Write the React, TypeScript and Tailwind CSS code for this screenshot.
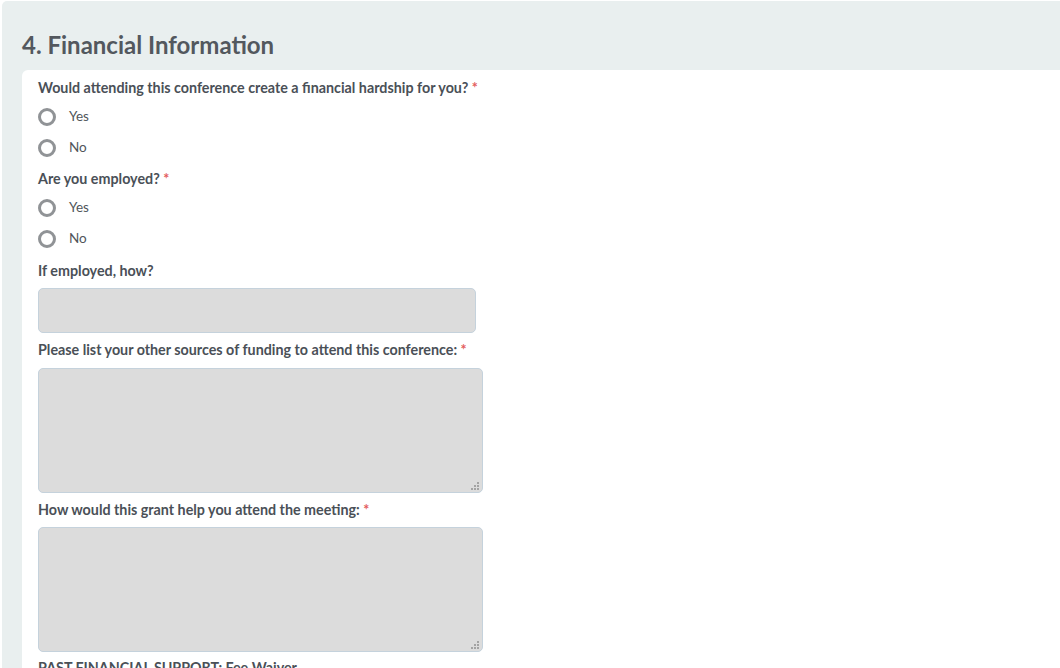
import React from "react";

const Label: React.FunctionComponent<{ text: string; required?: boolean }> = ({
  text,
  required,
}) => (
  <label className="block h-[18px] text-[14.3px] leading-[18px] font-bold text-[#4a5057]">
    {text}
    {required && <span className="text-[#e35d5d]"> *</span>}
  </label>
);

const Radio: React.FunctionComponent<{ name: string; value: string }> = ({
  name,
  value,
}) => (
  <label className="flex items-center h-[31px] cursor-pointer">
    <input type="radio" name={name} value={value} className="sr-only" />
    <span className="w-[18px] h-[18px] rounded-full border-[3px] border-[#909396] bg-white" />
    <span className="ml-[13px] text-[13.5px] text-[#50555a]">{value}</span>
  </label>
);

// dotted resize grip in the corner of the text areas
const Grip = () => (
  <svg
    className="absolute right-[4px] bottom-[3px] pointer-events-none"
    width="8"
    height="8"
    viewBox="0 0 8 8"
  >
    <rect x="6" y="0" width="2" height="2" fill="#a3a3a3" />
    <rect x="3" y="3" width="2" height="2" fill="#a3a3a3" />
    <rect x="6" y="3" width="2" height="2" fill="#a3a3a3" />
    <rect x="0" y="6" width="2" height="2" fill="#a3a3a3" />
    <rect x="3" y="6" width="2" height="2" fill="#a3a3a3" />
    <rect x="6" y="6" width="2" height="2" fill="#a3a3a3" />
  </svg>
);

const Area: React.FunctionComponent<{ name: string; className: string }> = ({
  name,
  className,
}) => (
  <div className={`relative w-[445px] h-[125px] ${className}`}>
    <textarea
      name={name}
      className="block w-full h-full resize-none rounded-[5px] border border-[#c5d2dc] bg-[#dcdcdc] px-3 py-2 text-[13px] outline-none"
    />
    <Grip />
  </div>
);

const App: React.FunctionComponent<{}> = () => {
  return (
    <div className="h-screen bg-white pt-[1px] pl-[2px] overflow-hidden font-['Lato',sans-serif]">
      <section className="bg-[#e9efef] rounded-tl-[5px] pl-[20px] min-h-[667px]">
        <h2 className="pt-[30px] h-[69px] text-[24px] leading-[28px] font-bold text-[#53585e]">
          4. Financial Information
        </h2>
        <form className="bg-white rounded-tl-[6px] pl-[16px] pt-[9px] pb-8 min-h-[600px]">
          <Label text="Would attending this conference create a financial hardship for you?" required />
          <div className="mt-[4px]">
            <Radio name="hardship" value="Yes" />
            <Radio name="hardship" value="No" />
          </div>

          <div className="mt-[7px]">
            <Label text="Are you employed?" required />
          </div>
          <div className="mt-[4px]">
            <Radio name="employed" value="Yes" />
            <Radio name="employed" value="No" />
          </div>

          <div className="mt-[8px]">
            <Label text="If employed, how?" />
          </div>
          <input
            type="text"
            name="employedHow"
            className="block mt-[8px] w-[438px] h-[45px] rounded-[5px] border border-[#c5d2dc] bg-[#dcdcdc] px-3 text-[13px] outline-none"
          />

          <div className="mt-[8px]">
            <Label text="Please list your other sources of funding to attend this conference:" required />
          </div>
          <Area name="funding" className="mt-[9px]" />

          <div className="mt-[8px]">
            <Label text="How would this grant help you attend the meeting:" required />
          </div>
          <Area name="grantHelp" className="mt-[8px]" />

          <div className="mt-[7px]">
            <Label text="PAST FINANCIAL SUPPORT: Fee Waiver" />
          </div>
        </form>
      </section>
    </div>
  );
};

export default App;
